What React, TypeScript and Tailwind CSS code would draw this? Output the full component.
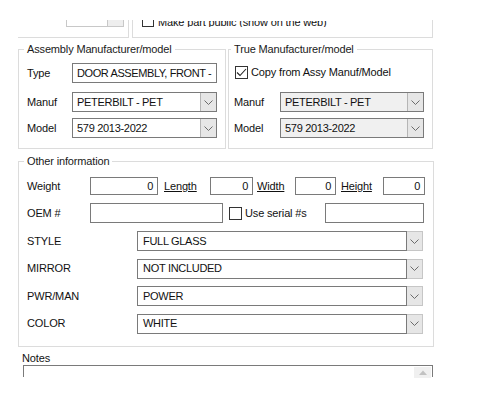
import React from "react";

const Chevron = () => (
  <svg width="9" height="5" viewBox="0 0 9 5">
    <path d="M0.5 0.5 L4.5 4.5 L8.5 0.5" stroke="#6b6b6b" strokeWidth="1" fill="none" />
  </svg>
);

const Combo = ({ value, w, disabled = false }: { value: string; w: string; disabled?: boolean }) => (
  <div className={`flex ${w} h-[20px] border border-[#7a7a7a] ${disabled ? "bg-[#f0f0f0]" : "bg-white"}`}>
    <div className="flex-1 pl-[4px] flex items-center leading-none whitespace-nowrap overflow-hidden tracking-[-0.3px]">{value}</div>
    <div className="w-[16px] border-l border-[#b5b5b5] bg-[#e6e6e6] flex items-center justify-center">
      <Chevron />
    </div>
  </div>
);

const TextBox = ({ value = "", w, h = "h-[20px]", right = false }: { value?: string; w: string; h?: string; right?: boolean }) => (
  <div
    className={`${w} ${h} border border-[#7a7a7a] bg-white flex items-center px-[4px] leading-none whitespace-nowrap overflow-hidden tracking-[-0.4px] ${
      right ? "justify-end" : ""
    }`}
  >
    {value}
  </div>
);

const CheckBox = ({ checked = false }: { checked?: boolean }) => (
  <div className="w-[13px] h-[13px] border border-[#333] bg-white flex items-center justify-center shrink-0">
    {checked && (
      <svg width="11" height="9" viewBox="0 0 11 9">
        <path d="M1 4.5 L4 7.5 L10 1" stroke="#222" strokeWidth="1.1" fill="none" />
      </svg>
    )}
  </div>
);

const Legend = ({ children }: { children: React.ReactNode }) => (
  <legend className="-ml-[3px] px-[3px] leading-[14px] text-[#1a1a1a]">{children}</legend>
);

const SelectRow = ({ label, value }: { label: string; value: string }) => (
  <div className="flex items-center h-[20px]">
    <div className="w-[110px]">{label}</div>
    <div className="flex w-[286px] h-[20px]">
      <div className="flex-1 border border-[#7a7a7a] bg-white pl-[5px] flex items-center leading-none tracking-[-0.3px]">{value}</div>
      <div className="w-[16px] border border-l-0 border-[#c6c6c6] bg-[#e6e6e6] flex items-center justify-center">
        <Chevron />
      </div>
    </div>
  </div>
);

export default function App() {
  return (
    <div className="w-[500px] h-[400px] bg-white font-['Liberation_Sans',Arial,sans-serif] text-[11px] tracking-[-0.15px] text-[#111] pt-[20px]">
      {/* Top partially hidden row */}
      <div className="flex h-[18px]">
        <div className="ml-[18px] w-[111px] border-r border-b border-[#dcdcdc]">
          <div className="ml-[48px] flex w-[58px] h-[7px] border border-t-0 border-[#c8c8c8] bg-white">
            <div className="flex-1" />
            <div className="w-[16px] border-l border-[#c8c8c8] bg-[#eeeeee]" />
          </div>
        </div>
        <div className="ml-[3px] w-[301px] border-l border-r border-b border-[#dcdcdc]">
          <div className="flex items-end ml-[9px] gap-[4px] h-[7px]">
            <div className="w-[12px] h-[7px] border border-t-0 border-[#333]" />
            <div className="h-[6px] overflow-hidden flex items-end">
              <span className="leading-[13px] -mb-[2px] whitespace-nowrap">Make part public (show on the web)</span>
            </div>
          </div>
        </div>
      </div>

      {/* Manufacturer boxes */}
      <div className="flex ml-[18px] mt-[4px] gap-[2px]">
        <fieldset className="w-[207px] h-[107px] border border-[#dcdcdc] px-[8px]">
          <Legend>Assembly Manufacturer/model</Legend>
          <div className="flex items-center mt-[7px] h-[20px]">
            <div className="w-[45px]">Type</div>
            <TextBox value="DOOR ASSEMBLY, FRONT -" w="w-[145px]" />
          </div>
          <div className="flex items-center mt-[9px]">
            <div className="w-[45px]">Manuf</div>
            <Combo value="PETERBILT - PET" w="w-[145px]" />
          </div>
          <div className="flex items-center mt-[6px]">
            <div className="w-[45px]">Model</div>
            <Combo value="579 2013-2022" w="w-[145px]" />
          </div>
        </fieldset>
        <fieldset className="w-[205px] h-[107px] border border-[#dcdcdc] px-[5px]">
          <Legend>True Manufacturer/model</Legend>
          <div className="flex items-center ml-[1px] mt-[9px] h-[14px] gap-[3px]">
            <CheckBox checked />
            <span>Copy from Assy Manuf/Model</span>
          </div>
          <div className="flex items-center mt-[13px]">
            <div className="w-[46px]">Manuf</div>
            <Combo value="PETERBILT - PET" w="w-[144px]" disabled />
          </div>
          <div className="flex items-center mt-[6px]">
            <div className="w-[46px]">Model</div>
            <Combo value="579 2013-2022" w="w-[144px]" disabled />
          </div>
        </fieldset>
      </div>

      {/* Other information */}
      <fieldset className="ml-[18px] mt-[5px] w-[414px] h-[193px] border border-[#dcdcdc] px-[8px]">
        <Legend>Other information</Legend>
        <div className="flex items-center mt-[9px] h-[18px]">
          <div className="w-[63px]">Weight</div>
          <TextBox value="0" w="w-[68px]" h="h-[18px]" right />
          <div className="w-[52px] pl-[6px] underline">Length</div>
          <TextBox value="0" w="w-[43px]" h="h-[18px]" right />
          <div className="w-[42px] pl-[4px] underline">Width</div>
          <TextBox value="0" w="w-[41px]" h="h-[18px]" right />
          <div className="w-[47px] pl-[5px] underline">Height</div>
          <TextBox value="0" w="w-[42px]" h="h-[18px]" right />
        </div>
        <div className="flex items-center mt-[8px] h-[20px]">
          <div className="w-[63px]">OEM #</div>
          <TextBox w="w-[133px]" />
          <div className="ml-[6px] flex items-center gap-[3px] w-[96px]">
            <CheckBox />
            <span>Use serial #s</span>
          </div>
          <TextBox w="w-[99px]" />
        </div>
        <div className="flex flex-col gap-[7.5px] mt-[8px]">
          <SelectRow label="STYLE" value="FULL GLASS" />
          <SelectRow label="MIRROR" value="NOT INCLUDED" />
          <SelectRow label="PWR/MAN" value="POWER" />
          <SelectRow label="COLOR" value="WHITE" />
        </div>
      </fieldset>

      {/* Notes */}
      <div className="ml-[22px] mt-[5px] leading-[13px]">Notes</div>
      <div className="ml-[23px] w-[410px] h-[12px] border border-b-0 border-[#7a7a7a] bg-white flex justify-end">
        <div className="w-[17px] h-[11px] mt-[1px] mr-[1px] bg-[#f0f0f0] flex items-start justify-center pt-[3px]">
          <svg width="8" height="5" viewBox="0 0 8 5">
            <path d="M0 5 L4 0.5 L8 5 Z" fill="#c2c2c2" />
          </svg>
        </div>
      </div>
    </div>
  );
}
